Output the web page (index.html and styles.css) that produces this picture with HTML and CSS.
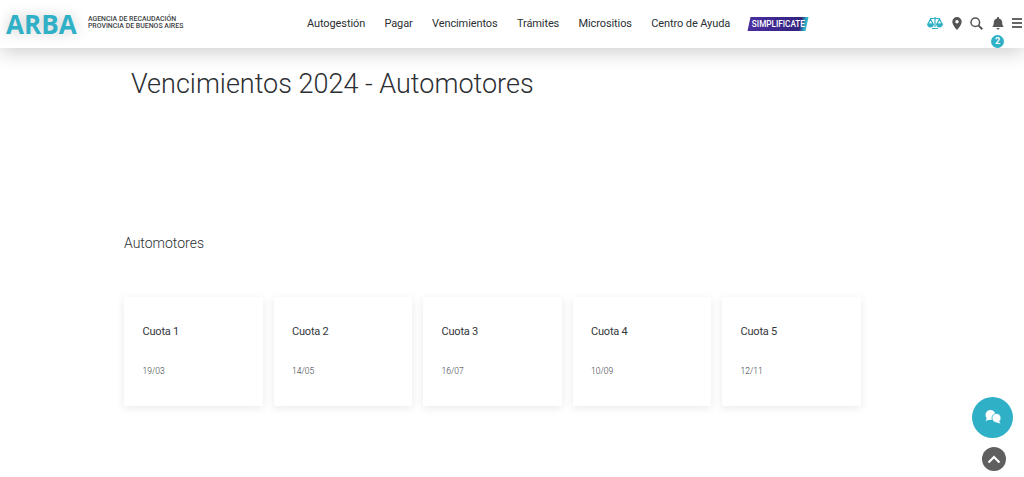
FILE: index.html
```html
<!DOCTYPE html>
<html lang="es">
<head>
<meta charset="utf-8">
<title>Vencimientos 2024 - Automotores</title>
<link rel="stylesheet" href="styles.css">
</head>
<body>
<header class="header">
  <div class="brand">
    <span class="logo">ARBA</span>
    <span class="agency">AGENCIA DE RECAUDACIÓN<br>PROVINCIA DE BUENOS AIRES</span>
  </div>
  <nav class="nav">
    <a>Autogestión</a><a>Pagar</a><a>Vencimientos</a><a>Trámites</a><a>Micrositios</a><a>Centro de Ayuda</a>
    <span class="simplificate">SIMPLIFICATE</span>
  </nav>
  <div class="tools">
    <svg class="icon" width="16" height="14" viewBox="0 0 16 14" fill="none" stroke="#2fb0c6" stroke-width="1.2"><path d="M8 1v10M3 2.500h10M5 12.500h6"/><path d="M3.500 3 1 8h5zM12.500 3 10 8h5z"/><path d="M.8 8.300a2.700 2.500 0 0 0 5.400 0zM9.800 8.300a2.700 2.500 0 0 0 5.400 0z" fill="#2fb0c6"/></svg>
    <svg class="icon pin" width="10" height="13" viewBox="0 0 10 13"><path fill-rule="evenodd" fill="#555" d="M5 0a4.700 4.700 0 0 1 4.700 4.700C9.700 8 5 13 5 13S.3 8 .3 4.700A4.700 4.700 0 0 1 5 0zm0 3a1.700 1.700 0 1 0 0 3.400A1.700 1.700 0 0 0 5 3z"/></svg>
    <svg class="icon" width="13" height="13" viewBox="0 0 13 13" fill="none" stroke="#555" stroke-width="1.500"><circle cx="5.300" cy="5.300" r="4.300"/><path d="M8.400 8.400 12.300 12.300" stroke-width="2"/></svg>
    <span class="bell">
      <svg width="12" height="13" viewBox="0 0 12 13"><path fill="#555" d="M6 0c.6 0 1 .4 1 1v.5c2 .4 3.200 2 3.200 4 0 2.500.6 3.300 1.600 4.500H.2c1-1.200 1.600-2 1.600-4.500 0-2 1.200-3.600 3.200-4V1c0-.6.400-1 1-1zM4.500 11h3a1.500 1.500 0 0 1-3 0z"/></svg>
      <span class="badge">2</span>
    </span>
    <span class="burger"><i></i><i></i><i></i></span>
  </div>
</header>
<main class="main">
  <h1 class="title">Vencimientos 2024 - Automotores</h1>
  <h2 class="section">Automotores</h2>
  <div class="cards">
    <div class="card"><div class="card-title">Cuota 1</div><div class="card-date">19/03</div></div>
    <div class="card"><div class="card-title">Cuota 2</div><div class="card-date">14/05</div></div>
    <div class="card"><div class="card-title">Cuota 3</div><div class="card-date">16/07</div></div>
    <div class="card"><div class="card-title">Cuota 4</div><div class="card-date">10/09</div></div>
    <div class="card"><div class="card-title">Cuota 5</div><div class="card-date">12/11</div></div>
  </div>
</main>
<button class="chat" aria-label="Chat">
  <svg width="18" height="15" viewBox="0 0 18 15"><circle cx="6.500" cy="5" r="5" fill="#fff"/><path fill="#fff" d="M3 8 1.500 11 6 9.500z"/><circle cx="12.500" cy="8" r="4.500" fill="#fff" stroke="#2fb0c6" stroke-width=".8"/><path fill="#fff" d="M15 11l1.500 2.500L12 12.500z"/></svg>
</button>
<button class="top" aria-label="Subir">
  <svg width="14" height="9" viewBox="0 0 14 9" fill="none" stroke="#fff" stroke-width="2.200"><path d="M1.500 7.500 7 2l5.500 5.500"/></svg>
</button>
</body>
</html>
```
FILE: styles.css
```css
* { box-sizing: border-box; }
html, body { margin: 0; height: 477px; overflow: hidden; background: #fff; }
body { font-family: Roboto, "Open Sans", sans-serif; color: #33363b; }

.header {
  display: flex;
  align-items: center;
  height: 48px;
  background: #fff;
  box-shadow: 0 4px 20px rgba(0, 0, 0, .2);
  position: relative;
}
.brand { display: flex; align-items: center; width: 307px; padding-left: 6px; gap: 10px; }
.logo {
  font-family: "Open Sans", sans-serif;
  font-weight: 700;
  font-size: 26px;
  line-height: 48px;
  margin-top: -1px;
  color: #2fb0c6;
  letter-spacing: .1px;
  text-shadow: 0 0 14px rgba(0, 0, 0, .22);
}
.agency {
  font-size: 6.950px;
  line-height: 7.500px;
  font-weight: 500;
  color: #3d3f44;
  white-space: nowrap;
  margin: -2px 0 0 1px;
}
.nav { display: flex; align-items: center; gap: 19.300px; font-size: 11px; letter-spacing: -.1px; color: #2c2f33; white-space: nowrap; margin-top: -2px; }
.simplificate {
  position: relative;
  width: 58px;
  height: 14px;
  margin-top: 1px;
  color: #fff;
  font-size: 8.200px;
  font-weight: 500;
  line-height: 14px;
  letter-spacing: 0;
  text-align: center;
  isolation: isolate;
}
.simplificate::before {
  content: "";
  position: absolute;
  inset: 0;
  z-index: -1;
  background: linear-gradient(90deg, #4a2e9e, #33237f 88%, #2fb0c6 97%);
  transform: skewX(-12deg);
}
.tools { display: flex; align-items: center; gap: 9px; margin-left: auto; padding-right: 2px; margin-top: -2px; }
.icon { display: block; }
.pin { margin-right: -1px; }
.bell { position: relative; display: block; height: 13px; }
.bell svg { display: block; }
.badge {
  position: absolute;
  left: -1px;
  top: 18px;
  width: 13px;
  height: 13px;
  border-radius: 50%;
  background: #2fb0c6;
  color: #fff;
  font-size: 9px;
  font-weight: 700;
  line-height: 13px;
  text-align: center;
}
.burger { display: flex; flex-direction: column; gap: 2px; width: 10px; margin-left: -1px; }
.burger i { display: block; height: 2px; background: #666; }

.main { padding-left: 124px; }
.title { margin: 0; padding: 18px 0 0 7px; font-size: 27px; line-height: 36px; font-weight: 300; color: #2c2f33; }
.section { margin: 0; padding-top: 131px; font-size: 14px; line-height: 20px; font-weight: 300; color: #2c2f33; }
.cards { display: flex; gap: 11px; margin-top: 44px; }
.card {
  width: 138.500px;
  height: 109px;
  padding: 27px 18.500px 0;
  background: #fff;
  box-shadow: 0 2px 10px rgba(0, 0, 0, .09);
  border-radius: 2px;
}
.card-title { font-size: 11px; line-height: 16px; letter-spacing: -.2px; color: #33363b; }
.card-date { margin-top: 25px; font-size: 8.500px; line-height: 12px; font-weight: 300; color: #33363b; }

.chat, .top { position: fixed; border: 0; padding: 0; display: flex; align-items: center; justify-content: center; border-radius: 50%; }
.chat { left: 972px; top: 397px; width: 41px; height: 41px; background: #2fb0c6; }
.top { left: 982px; top: 447px; width: 24px; height: 24px; background: #5f5f5f; }
```
